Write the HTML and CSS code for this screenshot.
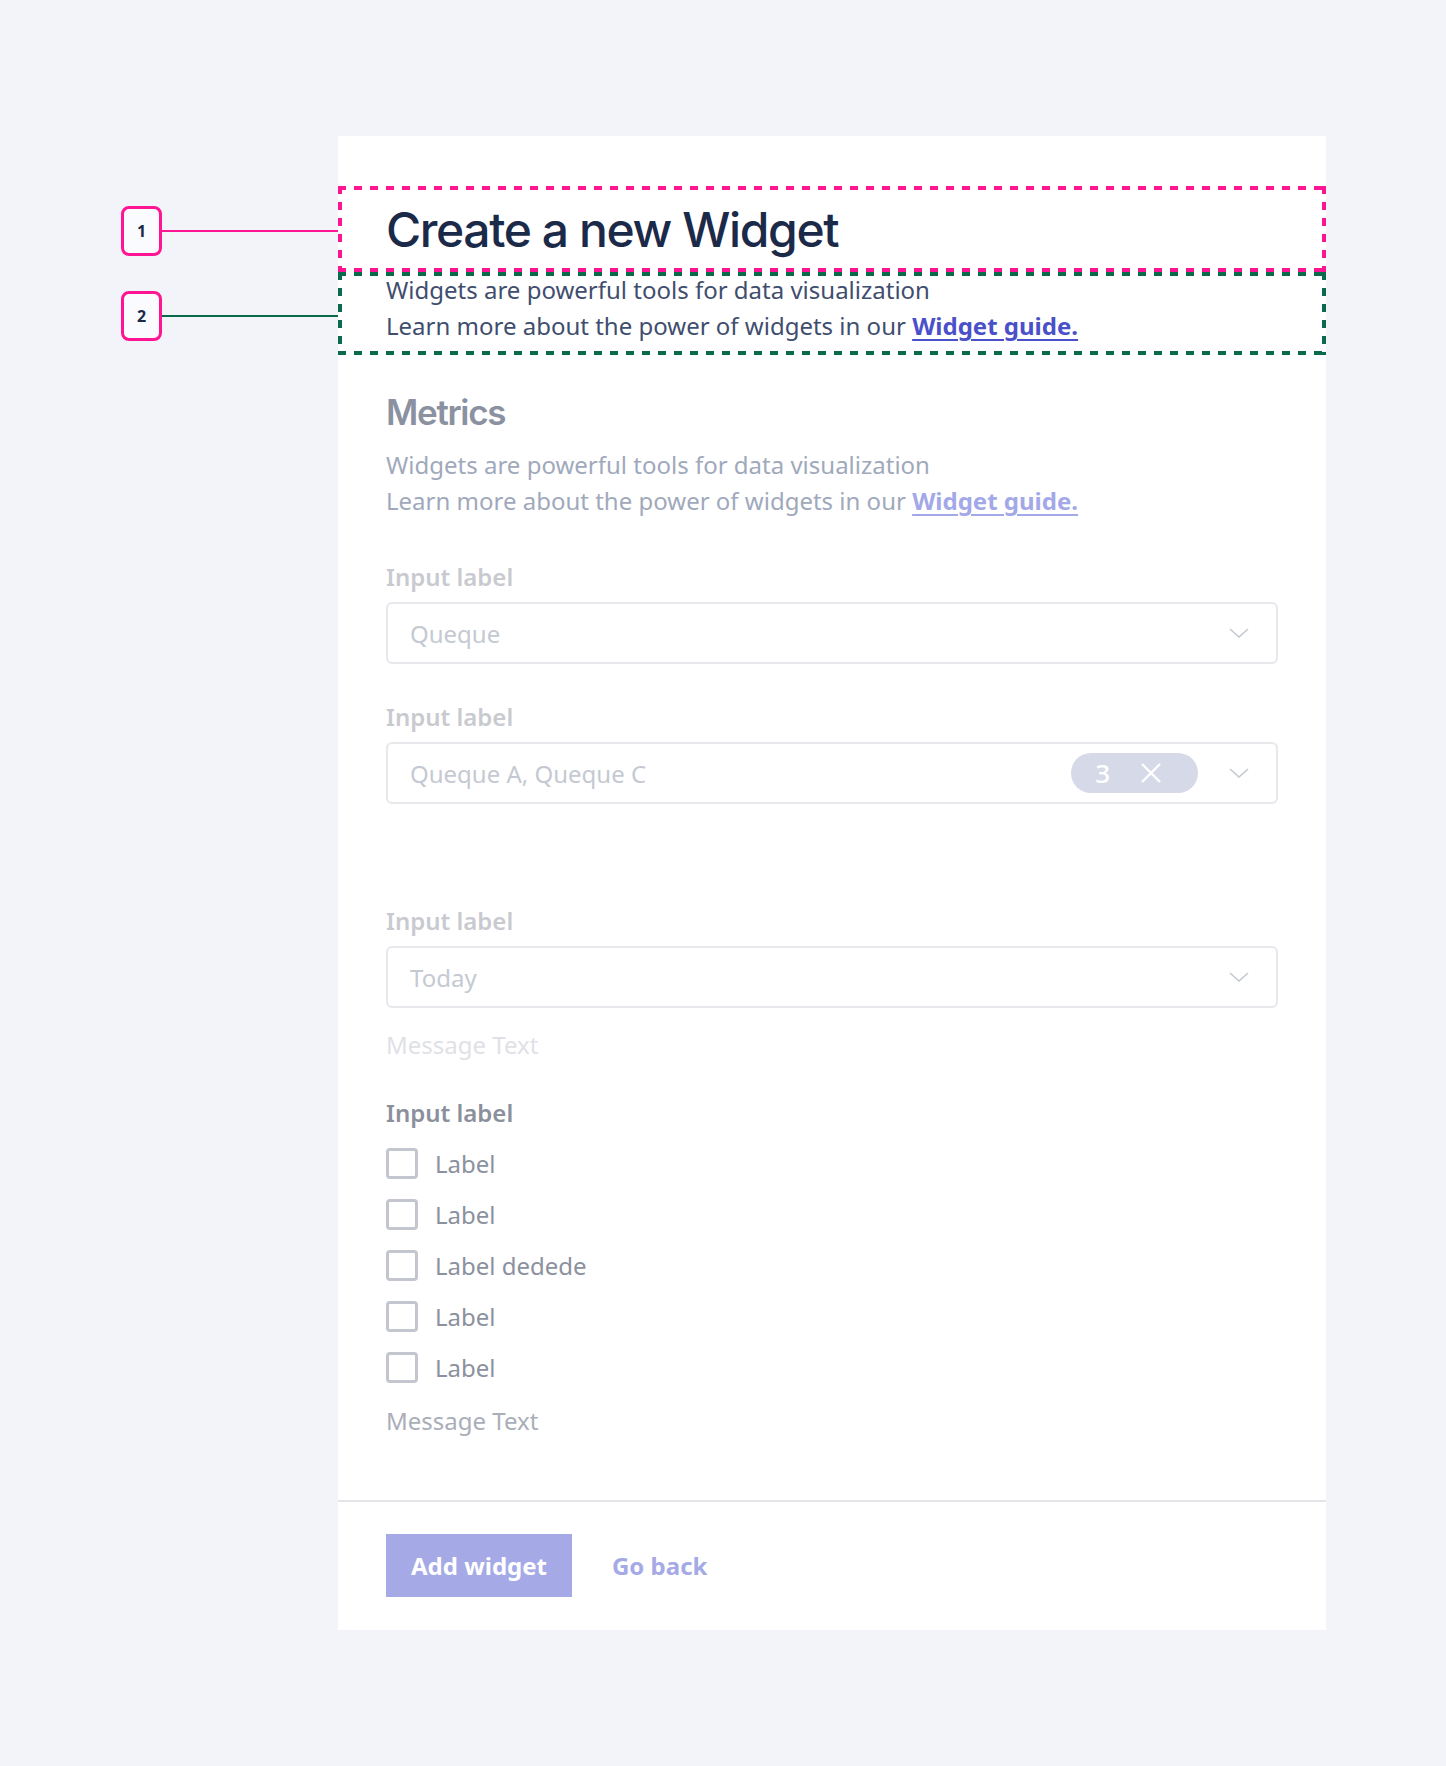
FILE: index.html
```html
<!DOCTYPE html>
<html lang="en">
<head>
  <meta charset="UTF-8">
  <meta name="viewport" content="width=device-width, initial-scale=1.0">
  <title>Create a new Widget</title>
  <link rel="stylesheet" href="styles.css">
</head>
<body>
  <div class="page">
    <div class="notes">
      <div class="note note-pink">
        <span class="note-num">1</span>
        <span class="note-line"></span>
      </div>
      <div class="note note-green">
        <span class="note-num">2</span>
        <span class="note-line"></span>
      </div>
    </div>

    <main class="card">
      <header class="card-head">
        <div class="title-block">
          <h1>Create a new Widget</h1>
        </div>
        <div class="intro-block">
          <p>Widgets are powerful tools for data visualization<br>
          Learn more about the power of widgets in our <a href="#">Widget guide.</a></p>
        </div>
      </header>

      <section class="card-body">
        <h2>Metrics</h2>
        <p class="section-desc">Widgets are powerful tools for data visualization<br>
        Learn more about the power of widgets in our <a href="#">Widget guide.</a></p>

        <div class="field field-first">
          <label class="field-label">Input label</label>
          <div class="select">
            <span class="placeholder">Queque</span>
            <svg class="chevron" viewBox="0 0 20 10"><polyline points="1,1 10,9 19,1"/></svg>
          </div>
        </div>

        <div class="field">
          <label class="field-label">Input label</label>
          <div class="select">
            <span class="placeholder">Queque A, Queque C</span>
            <span class="chip">
              <span class="chip-count">3</span>
              <svg class="chip-x" viewBox="0 0 24 24"><path d="M3 3 L21 21 M21 3 L3 21"/></svg>
            </span>
            <svg class="chevron" viewBox="0 0 20 10"><polyline points="1,1 10,9 19,1"/></svg>
          </div>
        </div>

        <div class="field field-spaced">
          <label class="field-label">Input label</label>
          <div class="select">
            <span class="placeholder">Today</span>
            <svg class="chevron" viewBox="0 0 20 10"><polyline points="1,1 10,9 19,1"/></svg>
          </div>
          <p class="message message-faint">Message Text</p>
        </div>

        <div class="field field-checks">
          <span class="field-label field-label-dark">Input label</span>
          <ul class="check-list">
            <li class="check"><span class="box"></span>Label</li>
            <li class="check"><span class="box"></span>Label</li>
            <li class="check"><span class="box"></span>Label dedede</li>
            <li class="check"><span class="box"></span>Label</li>
            <li class="check"><span class="box"></span>Label</li>
          </ul>
          <p class="message">Message Text</p>
        </div>
      </section>

      <footer class="card-foot">
        <button class="btn-primary">Add widget</button>
        <a class="btn-link" href="#">Go back</a>
      </footer>
    </main>
  </div>
</body>
</html>
```

FILE: styles.css
```css
html, body {
  margin: 0;
  background: #f3f4f9;
}

body {
  font-family: "Noto Sans", "Open Sans", sans-serif;
  min-height: 1766px;
}

.page {
  display: flex;
  align-items: flex-start;
  padding: 136px 0 136px 121px;
}

/* annotation markers on the left */
.notes {
  width: 217px;
  flex-shrink: 0;
  padding-top: 70px;
}

.note {
  display: flex;
  align-items: center;
  height: 50px;
}

.note + .note {
  margin-top: 35px;
}

.note-num {
  box-sizing: border-box;
  width: 41px;
  height: 50px;
  display: flex;
  align-items: center;
  justify-content: center;
  border: 3px solid #ff1493;
  border-radius: 8px;
  background: #fafbff;
  color: #1c2a4a;
  font-size: 16px;
  font-weight: 700;
}

.note-line {
  flex: 1;
  height: 2px;
  background: #ff1493;
}

.note-green .note-line {
  background: #0a6b4c;
}

/* card */
.card {
  width: 988px;
  background: #ffffff;
  padding-top: 50px;
}

.title-block,
.intro-block {
  position: relative;
  padding: 0 48px;
}

.title-block::after,
.intro-block::after {
  content: "";
  position: absolute;
  inset: 0;
  pointer-events: none;
  --dash: #ff1493;
  background:
    repeating-linear-gradient(to right, var(--dash) 0 8px, transparent 8px 16px) top left / 100% 4px no-repeat,
    repeating-linear-gradient(to right, var(--dash) 0 8px, transparent 8px 16px) bottom left / 100% 4px no-repeat,
    repeating-linear-gradient(to bottom, var(--dash) 0 8px, transparent 8px 16px) top left / 4px 100% no-repeat,
    repeating-linear-gradient(to bottom, var(--dash) 0 8px, transparent 8px 16px) top right / 4px 100% no-repeat;
}

.title-block {
  height: 86px;
}

.intro-block::after {
  --dash: #0a6b4c;
}

.title-block h1 {
  margin: 0;
  font-family: Inter, "Noto Sans", sans-serif;
  font-size: 48px;
  font-weight: 500;
  line-height: 88px;
  letter-spacing: -1.4px;
  color: #1c2a4a;
}

.intro-block p {
  margin: 0;
  padding-bottom: 11px;
  font-size: 24px;
  line-height: 36px;
  color: #3f4e6e;
}

.intro-block a {
  color: #4a50c9;
  font-weight: 700;
  text-decoration-thickness: 2px;
  text-underline-offset: 4px;
}

.card-body {
  padding: 0 48px 61px;
}

.card-body h2 {
  margin: 35px 0 0;
  font-family: Inter, "Noto Sans", sans-serif;
  font-size: 35px;
  font-weight: 600;
  line-height: 44px;
  letter-spacing: -1.3px;
  color: #8a91a0;
}

.section-desc {
  margin: 13px 0 0;
  font-size: 24px;
  line-height: 36px;
  color: #a0a9bb;
}

.section-desc a {
  color: #a3a8e8;
  font-weight: 700;
  text-decoration-thickness: 2px;
  text-underline-offset: 4px;
}

.field {
  margin-top: 35px;
}

.field-first {
  margin-top: 40px;
}

.field-spaced {
  margin-top: 99px;
}

.field-checks {
  margin-top: 32px;
}

.field-label {
  display: block;
  margin-bottom: 7px;
  font-size: 24px;
  line-height: 36px;
  font-weight: 600;
  color: #c9cacf;
}

.field-label-dark {
  margin-bottom: 14px;
  color: #8b909c;
}

.select {
  box-sizing: border-box;
  height: 62px;
  display: flex;
  align-items: center;
  padding: 0 27px 0 22px;
  border: 2px solid #e7e8ec;
  border-radius: 6px;
}

.placeholder {
  font-size: 24px;
  color: #c5c9d2;
}

.chevron {
  width: 20px;
  height: 10px;
  margin-left: auto;
  fill: none;
  stroke: #c5c9d1;
  stroke-width: 1.6;
}

.chip {
  margin-left: auto;
  height: 40px;
  display: flex;
  align-items: center;
  gap: 29px;
  padding: 0 35px 0 24px;
  border-radius: 20px;
  background: #d6dae8;
}

.chip + .chevron {
  margin-left: 31px;
}

.chip-count {
  font-size: 26px;
  font-weight: 500;
  color: #ffffff;
}

.chip-x {
  width: 24px;
  height: 24px;
  fill: none;
  stroke: #ffffff;
  stroke-width: 2.4;
}

.message {
  margin: 18px 0 0;
  font-size: 24px;
  line-height: 36px;
  color: #a9aeb9;
}

.message-faint {
  margin-top: 19px;
  color: #dfe1e6;
}

.check-list {
  list-style: none;
  margin: 0;
  padding: 0;
  display: flex;
  flex-direction: column;
  gap: 15px;
}

.check {
  display: flex;
  align-items: center;
  gap: 17px;
  height: 36px;
  font-size: 24px;
  color: #8b919e;
}

.box {
  box-sizing: border-box;
  width: 32px;
  height: 31px;
  border: 3px solid #c3c6ce;
  border-radius: 4px;
}

.card-foot {
  display: flex;
  align-items: center;
  gap: 40px;
  padding: 32px 48px 33px;
  border-top: 2px solid #e4e5e9;
}

.btn-primary {
  height: 63px;
  padding: 0 25px;
  border: none;
  border-radius: 0;
  background: #a5aae6;
  color: #ffffff;
  font-family: "Noto Sans", sans-serif;
  font-size: 24px;
  font-weight: 700;
}

.btn-link {
  color: #a5aae6;
  font-size: 24px;
  font-weight: 700;
  text-decoration: none;
}
```
